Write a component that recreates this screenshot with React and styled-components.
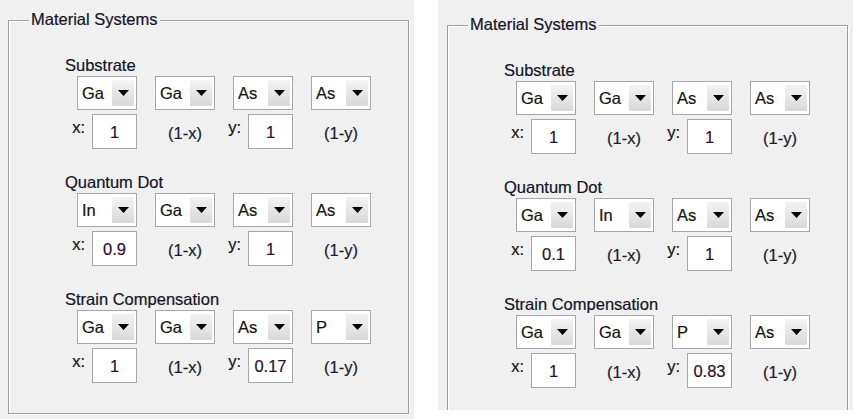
import React from "react";
import styled, { createGlobalStyle } from "styled-components";

const GlobalStyle = createGlobalStyle`
  html, body { margin: 0; padding: 0; background: #ffffff; }
  body {
    font-family: "Liberation Sans", Arial, sans-serif;
    color: #141420;
    -webkit-text-stroke: 0.2px currentColor;
  }
`;

const Page = styled.div`
  display: flex;
  align-items: flex-start;
  gap: 24px;
  width: 853px;
  height: 419px;
  background: #ffffff;
`;

const Shot = styled.div`
  box-sizing: border-box;
  width: ${(p) => p.$w}px;
  height: ${(p) => p.$h}px;
  background: #f0f0f0;
  overflow: hidden;
  padding: ${(p) => p.$pt}px 0 0 ${(p) => p.$pl}px;
`;

const Frame = styled.div`
  position: relative;
  box-sizing: border-box;
  width: 401px;
  height: 394px;
  border: 1px solid #a0a0a0;
  box-shadow: inset 1px 1px 0 #ffffff, 1px 1px 0 #ffffff;
  padding: 35px 0 0 56px;
`;

const Legend = styled.div`
  position: absolute;
  top: -11px;
  left: 20px;
  padding: 0 2px;
  background: #f0f0f0;
  font-size: 16.5px;
  line-height: 18px;
  color: #141428;
`;

const Section = styled.div`
  display: flex;
  flex-direction: column;
  margin-top: ${(p) => p.$mt || 0}px;
`;

const Title = styled.div`
  font-size: 16.5px;
  line-height: 18px;
  color: #141428;
`;

const Row = styled.div`
  display: grid;
  grid-template-columns: repeat(4, 60px);
  column-gap: 18px;
  margin-left: 12px;
  margin-top: ${(p) => p.$mt || 0}px;
`;

const Select = styled.div`
  box-sizing: border-box;
  display: flex;
  align-items: stretch;
  width: 60px;
  height: 34px;
  border: 1px solid #a7a7a7;
  background: #ffffff;
  padding: 3px 2px 3px 0;
`;

const SelectText = styled.span`
  flex: 1;
  padding-left: 4px;
  display: flex;
  align-items: center;
  font-size: 16.5px;
  color: #141414;
`;

const ArrowButton = styled.span`
  width: 22px;
  display: flex;
  align-items: center;
  justify-content: center;
  background: linear-gradient(#f3f3f3, #d9d9d9);
  border-radius: 1px;
`;

const Cell = styled.div`
  display: flex;
  align-items: center;
  justify-content: ${(p) => p.$justify || "flex-end"};
  height: 35px;
`;

const VarLabel = styled.span`
  flex-shrink: 0;
  align-self: flex-start;
  margin-top: 4px;
  margin-right: 7px;
  font-size: 16.5px;
  line-height: 18px;
  color: #141414;
`;

const Edit = styled.div`
  flex-shrink: 0;
  box-sizing: border-box;
  width: 45px;
  height: 35px;
  border: 1px solid #a7a7a7;
  background: #ffffff;
  display: flex;
  align-items: center;
  justify-content: center;
  font-size: 16.5px;
  line-height: 18px;
  color: #2a1030;
`;

const Complement = styled.span`
  flex-shrink: 0;
  font-size: 16.5px;
  line-height: 18px;
  color: #1a1a2e;
  margin-top: 2px;
`;

const Triangle = () => (
  <svg width="11" height="6" viewBox="0 0 11 6">
    <path d="M0 0H11L5.5 6Z" fill="#000" />
  </svg>
);

const Dropdown = ({ value }) => (
  <Select>
    <SelectText>{value}</SelectText>
    <ArrowButton>
      <Triangle />
    </ArrowButton>
  </Select>
);

const MaterialSection = ({ title, elements, x, y, mt }) => (
  <Section $mt={mt}>
    <Title>{title}</Title>
    <Row $mt={2}>
      {elements.map((e, i) => (
        <Dropdown key={i} value={e} />
      ))}
    </Row>
    <Row $mt={4}>
      <Cell>
        <VarLabel>x:</VarLabel>
        <Edit>{x}</Edit>
      </Cell>
      <Cell $justify="center">
        <Complement>(1-x)</Complement>
      </Cell>
      <Cell>
        <VarLabel>y:</VarLabel>
        <Edit>{y}</Edit>
      </Cell>
      <Cell $justify="center">
        <Complement>(1-y)</Complement>
      </Cell>
    </Row>
  </Section>
);

const MaterialPanel = ({ data }) => (
  <Frame>
    <Legend>Material Systems</Legend>
    <MaterialSection title="Substrate" {...data.substrate} mt={0} />
    <MaterialSection title="Quantum Dot" {...data.qd} mt={24} />
    <MaterialSection title="Strain Compensation" {...data.sc} mt={24} />
  </Frame>
);

const left = {
  substrate: { elements: ["Ga", "Ga", "As", "As"], x: "1", y: "1" },
  qd: { elements: ["In", "Ga", "As", "As"], x: "0.9", y: "1" },
  sc: { elements: ["Ga", "Ga", "As", "P"], x: "1", y: "0.17" },
};

const right = {
  substrate: { elements: ["Ga", "Ga", "As", "As"], x: "1", y: "1" },
  qd: { elements: ["Ga", "In", "As", "As"], x: "0.1", y: "1" },
  sc: { elements: ["Ga", "Ga", "P", "As"], x: "1", y: "0.83" },
};

export default function App() {
  return (
    <>
      <GlobalStyle />
      <Page>
        <Shot $w={414} $h={419} $pt={20} $pl={8}>
          <MaterialPanel data={left} />
        </Shot>
        <Shot $w={415} $h={410} $pt={25} $pl={9}>
          <MaterialPanel data={right} />
        </Shot>
      </Page>
    </>
  );
}
